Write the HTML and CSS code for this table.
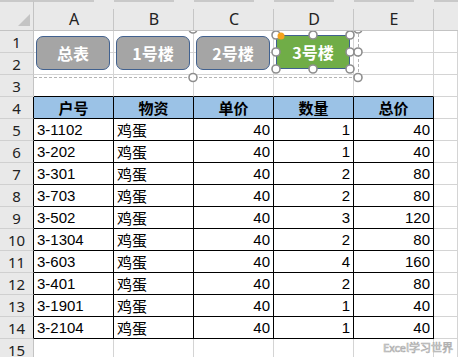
FILE: index.html
```html
<!DOCTYPE html>
<html>
<head>
<meta charset="utf-8">
<link rel="stylesheet" href="styles.css">
</head>
<body>
<div class="sheet">
  <div class="corner"><span class="tri"></span></div>
  <div class="ch">A</div><div class="ch">B</div><div class="ch">C</div><div class="ch">D</div><div class="ch">E</div><div class="ch last"></div>

  <div class="rh">1</div><div class="c"></div><div class="c"></div><div class="c"></div><div class="c"></div><div class="c"></div><div class="c"></div>
  <div class="rh">2</div><div class="c"></div><div class="c"></div><div class="c"></div><div class="c"></div><div class="c"></div><div class="c"></div>
  <div class="rh">3</div><div class="c tb"></div><div class="c tb"></div><div class="c tb"></div><div class="c tb"></div><div class="c tb"></div><div class="c"></div>

  <div class="rh rb">4</div><div class="c t hd">户号</div><div class="c t hd">物资</div><div class="c t hd">单价</div><div class="c t hd">数量</div><div class="c t hd">总价</div><div class="c"></div>
  <div class="rh rb">5</div><div class="c t">3-1102</div><div class="c t">鸡蛋</div><div class="c t n">40</div><div class="c t n">1</div><div class="c t n">40</div><div class="c"></div>
  <div class="rh rb">6</div><div class="c t">3-202</div><div class="c t">鸡蛋</div><div class="c t n">40</div><div class="c t n">1</div><div class="c t n">40</div><div class="c"></div>
  <div class="rh rb">7</div><div class="c t">3-301</div><div class="c t">鸡蛋</div><div class="c t n">40</div><div class="c t n">2</div><div class="c t n">80</div><div class="c"></div>
  <div class="rh rb">8</div><div class="c t">3-703</div><div class="c t">鸡蛋</div><div class="c t n">40</div><div class="c t n">2</div><div class="c t n">80</div><div class="c"></div>
  <div class="rh rb">9</div><div class="c t">3-502</div><div class="c t">鸡蛋</div><div class="c t n">40</div><div class="c t n">3</div><div class="c t n">120</div><div class="c"></div>
  <div class="rh rb">10</div><div class="c t">3-1304</div><div class="c t">鸡蛋</div><div class="c t n">40</div><div class="c t n">2</div><div class="c t n">80</div><div class="c"></div>
  <div class="rh rb">11</div><div class="c t">3-603</div><div class="c t">鸡蛋</div><div class="c t n">40</div><div class="c t n">4</div><div class="c t n">160</div><div class="c"></div>
  <div class="rh rb">12</div><div class="c t">3-401</div><div class="c t">鸡蛋</div><div class="c t n">40</div><div class="c t n">2</div><div class="c t n">80</div><div class="c"></div>
  <div class="rh rb">13</div><div class="c t">3-1901</div><div class="c t">鸡蛋</div><div class="c t n">40</div><div class="c t n">1</div><div class="c t n">40</div><div class="c"></div>
  <div class="rh rb">14</div><div class="c t">3-2104</div><div class="c t">鸡蛋</div><div class="c t n">40</div><div class="c t n">1</div><div class="c t n">40</div><div class="c"></div>
  <div class="rh">15</div><div class="c"></div><div class="c"></div><div class="c"></div><div class="c"></div><div class="c"></div><div class="c"></div>

  <div class="shapes">
    <div class="btn b1">总表</div>
    <div class="btn b2">1号楼</div>
    <div class="btn b3">2号楼</div>
    <div class="btn b4">3号楼</div>
    <svg class="handles" width="424" height="330" viewBox="0 0 424 330">
      <g fill="none" stroke="#b4b4b4" stroke-width="1" stroke-dasharray="3 2">
        <path d="M0 46.5H324.5V0"/>
      </g>
      <g fill="#fff" stroke="#8e8e8e" stroke-width="1.6">
        <circle cx="242" cy="4" r="4"/>
        <circle cx="279" cy="4" r="4"/>
        <circle cx="316" cy="4" r="4"/>
        <circle cx="242" cy="21" r="4"/>
        <circle cx="316" cy="21" r="4"/>
        <circle cx="242" cy="38" r="4"/>
        <circle cx="279" cy="38" r="4"/>
        <circle cx="316" cy="38" r="4"/>
        <circle cx="159" cy="-2" r="4"/>
        <circle cx="324" cy="-2" r="4"/>
        <circle cx="324" cy="21" r="4"/>
        <circle cx="159" cy="46.5" r="4"/>
        <circle cx="324" cy="46.5" r="4"/>
      </g>
      <circle cx="247" cy="5" r="3.5" fill="#f5a21c"/>
    </svg>
  </div>
  <div class="wm">Excel学习世界</div>
</div>
</body>
</html>
```

FILE: styles.css
```css
html, body {
  margin: 0;
  padding: 0;
  background: #fff;
}
body {
  width: 458px;
  height: 357px;
  overflow: hidden;
  font-family: "Liberation Sans", "Noto Sans CJK SC", sans-serif;
}
.sheet {
  position: relative;
  display: grid;
  grid-template-columns: 34px repeat(5, 80px) 1fr;
  grid-template-rows: 31px repeat(15, 22px);
  width: 458px;
}
.sheet > div {
  box-sizing: border-box;
}
.corner {
  position: relative;
  background: #e9e9e9;
  border-right: 1px solid #c3c3c3;
  border-bottom: 1px solid #c3c3c3;
  border-top: 2px solid #c9c9c9;
}
.tri {
  position: absolute;
  right: 3px;
  bottom: 4px;
  width: 0;
  height: 0;
  border-left: 12px solid transparent;
  border-bottom: 12px solid #c4c4c4;
}
.ch {
  background:
    linear-gradient(#c6c6c6, #c6c6c6) right bottom / 1px 21px no-repeat,
    linear-gradient(90deg, #c9c9c9 0 75%, #e9e9e9 75% 100%) left top / 100% 2px no-repeat,
    #e9e9e9;
  border-bottom: 1px solid #c3c3c3;
  color: #222;
  font-family: "Noto Sans", "Liberation Sans", sans-serif;
  font-size: 16px;
  display: flex;
  align-items: flex-end;
  justify-content: center;
  line-height: 21px;
}
.ch.last {
  background:
    linear-gradient(#c9c9c9, #c9c9c9) left top / 100% 2px no-repeat,
    #e9e9e9;
}
.rh {
  background: #e9e9e9;
  border-right: 1px solid #c3c3c3;
  border-bottom: 1px solid #d0d0d0;
  color: #222;
  font-family: "Noto Sans", "Liberation Sans", sans-serif;
  font-size: 15px;
  display: flex;
  align-items: center;
  justify-content: center;
}
.rh.rb {
  border-right-color: #000;
}
.c {
  border-right: 1px solid #d4d4d4;
  border-bottom: 1px solid #d4d4d4;
  font-size: 15px;
  color: #000;
  display: flex;
  align-items: center;
  padding: 0 3px;
  white-space: nowrap;
  overflow: hidden;
}
.c.tb {
  border-bottom-color: #000;
}
.c.t {
  border-right-color: #000;
  border-bottom-color: #000;
}
.c.hd {
  background: #9bc2e6;
  font-weight: bold;
  justify-content: center;
}
.c.n {
  justify-content: flex-end;
}
.shapes {
  position: absolute;
  left: 34px;
  top: 31px;
  right: 0;
  bottom: 0;
  overflow: hidden;
}
.handles {
  position: absolute;
  left: 0;
  top: 0;
  overflow: visible;
}
.btn {
  position: absolute;
  top: 5px;
  width: 74px;
  height: 34px;
  box-sizing: border-box;
  border: 1px solid #41618f;
  border-radius: 7px;
  background: #a5a5a5;
  color: #fff;
  font-family: "Noto Sans CJK SC", sans-serif;
  font-weight: bold;
  font-size: 16px;
  display: flex;
  align-items: center;
  justify-content: center;
}
.b1 { left: 2px; }
.b2 { left: 82px; }
.b3 { left: 162px; }
.b4 {
  left: 242px;
  top: 4px;
  background: #70ad47;
  border-radius: 3px;
}
.wm {
  position: absolute;
  right: 5px;
  top: 341px;
  font-family: "Noto Sans CJK SC", sans-serif;
  font-size: 11px;
  line-height: 12px;
  color: #fff;
  -webkit-text-stroke: 0.7px #b0b0b0;
}
```
